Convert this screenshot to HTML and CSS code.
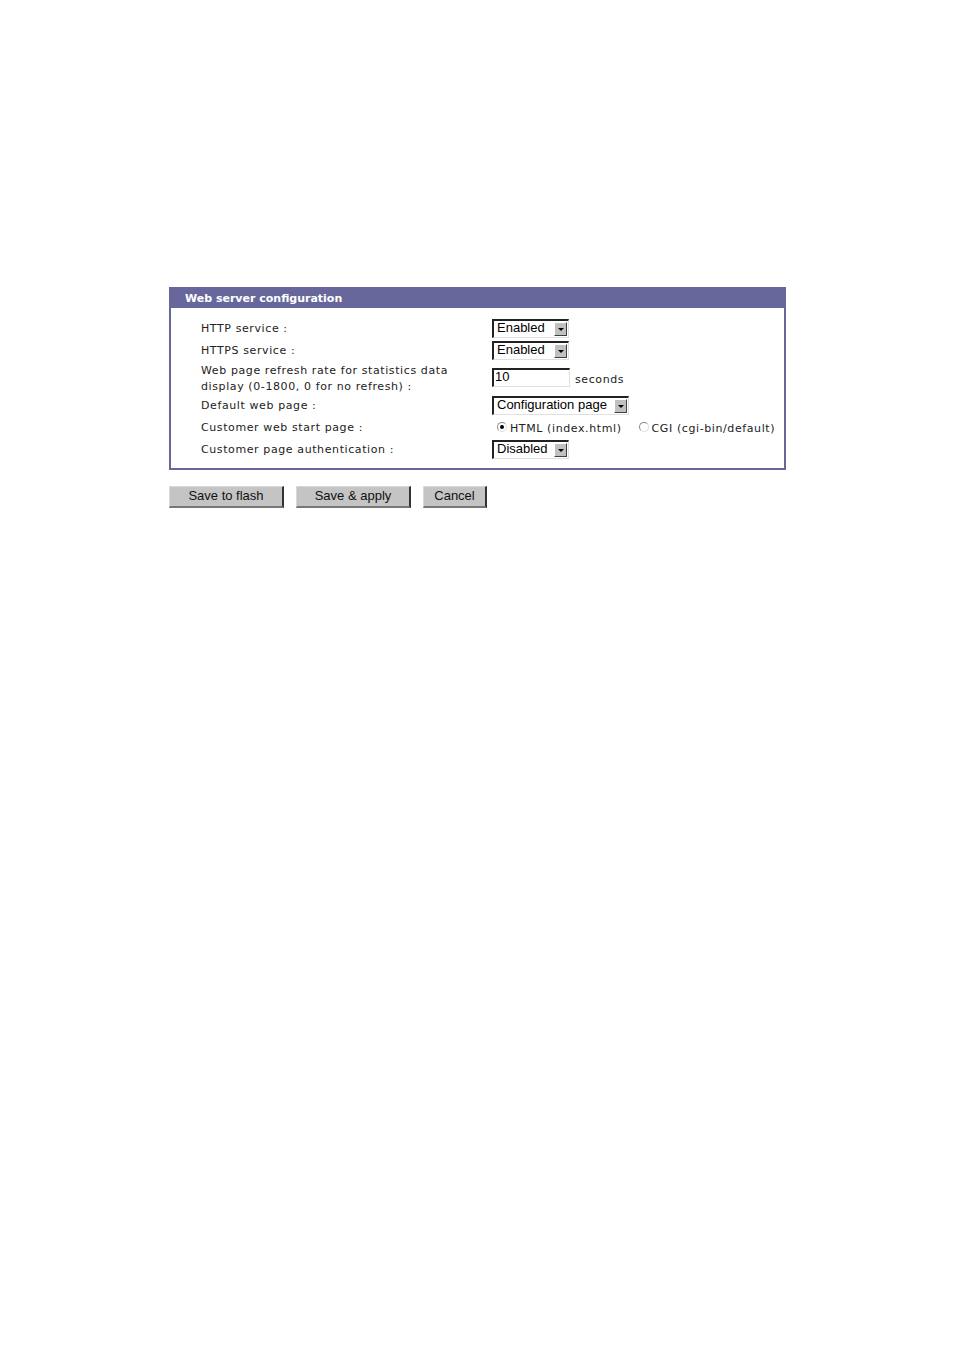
FILE: index.html
```html
<!DOCTYPE html>
<html>
<head>
<meta charset="utf-8">
<title>Web server configuration</title>
<link rel="stylesheet" href="styles.css">
</head>
<body>
<div class="page">
  <div class="panel">
    <div class="panel-head">Web server configuration</div>
    <div class="panel-body">
      <div class="row">
        <div class="label">HTTP service :</div>
        <div class="ctrl"><span class="sel w76"><span class="val">Enabled</span><span class="arr"></span></span></div>
      </div>
      <div class="row">
        <div class="label">HTTPS service :</div>
        <div class="ctrl"><span class="sel w76"><span class="val">Enabled</span><span class="arr"></span></span></div>
      </div>
      <div class="row tall">
        <div class="label">Web page refresh rate for statistics data<br>display (0-1800, 0 for no refresh) :</div>
        <div class="ctrl"><span class="inp">10</span><span class="unit">seconds</span></div>
      </div>
      <div class="row">
        <div class="label">Default web page :</div>
        <div class="ctrl"><span class="sel w136"><span class="val">Configuration page</span><span class="arr"></span></span></div>
      </div>
      <div class="row">
        <div class="label">Customer web start page :</div>
        <div class="ctrl radios">
          <span class="radio on"></span><span class="rtext">HTML (index.html)</span>
          <span class="radio r2"></span><span class="rtext">CGI (cgi-bin/default)</span>
        </div>
      </div>
      <div class="row">
        <div class="label">Customer page authentication :</div>
        <div class="ctrl"><span class="sel w76"><span class="val">Disabled</span><span class="arr"></span></span></div>
      </div>
    </div>
  </div>
  <div class="buttons">
    <span class="btn b1">Save to flash</span>
    <span class="btn b2">Save &amp; apply</span>
    <span class="btn b3">Cancel</span>
  </div>
</div>
</body>
</html>
```

FILE: styles.css
```css
html, body { margin: 0; padding: 0; background: #fff; }
.page { padding: 287px 0 0 169px; }
.panel {
  width: 613px;
  border: 2px solid #67679b;
  border-top: 0;
}
.panel-head {
  background: #67679b;
  color: #fff;
  font-family: "DejaVu Sans", Verdana, sans-serif;
  font-weight: bold;
  font-size: 11px;
  height: 21px;
  line-height: 23px;
  margin: 0 -2px;
  padding-left: 16px;
}
.panel-body { padding: 9px 0 8px 30px; }
.row { display: flex; align-items: center; height: 22px; }
.row.tall { height: 33px; }
.label {
  width: 291px;
  font-family: "DejaVu Sans", Verdana, sans-serif;
  font-size: 11px;
  letter-spacing: 0.6px;
  color: #222;
  line-height: 16px;
  padding-top: 2px;
}
.ctrl { display: flex; align-items: center; font-family: "Liberation Sans", Arial, sans-serif; font-size: 13px; color: #000; }
.sel {
  display: flex; align-items: center; justify-content: space-between;
  box-sizing: border-box; height: 19px;
  border-top: 2px solid #222; border-left: 2px solid #222;
  border-right: 1px solid #e0e0e0; border-bottom: 1px solid #e0e0e0;
  background: #fff;
  padding-left: 3px;
}
.w76 { width: 77px; }
.w136 { width: 137px; }
.val { line-height: 15px; margin-top: -2px; }
.arr {
  position: relative;
  width: 13px; height: 14px; box-sizing: border-box;
  background: #c0c0c0;
  border-top: 1px solid #fff; border-left: 1px solid #fff;
  border-right: 1px solid #404040; border-bottom: 1px solid #404040;
  margin-right: 1px;
}
.arr::after {
  content: ""; position: absolute; left: 3px; top: 5px;
  border-left: 3px solid transparent; border-right: 3px solid transparent;
  border-top: 3px solid #000;
}
.inp {
  box-sizing: border-box; width: 78px; height: 19px;
  border-top: 2px solid #222; border-left: 2px solid #222;
  border-right: 1px solid #e0e0e0; border-bottom: 1px solid #e0e0e0;
  padding-left: 1px; line-height: 14px;
  margin-top: -1px;
}
.unit {
  font-family: "DejaVu Sans", Verdana, sans-serif; font-size: 11px; letter-spacing: 0.6px; color: #222;
  margin-left: 5px; margin-top: 3px;
}
.radios { font-family: "DejaVu Sans", Verdana, sans-serif; font-size: 11px; letter-spacing: 0.6px; color: #222; padding-top: 2px; }
.radio {
  width: 10px; height: 10px; box-sizing: border-box; border-radius: 50%;
  border: 1px solid #888; border-right-color: #ddd; border-bottom-color: #ddd;
  background: #fff; position: relative; margin-left: 5px; margin-right: 3px; margin-top: -3px;
}
.radio.on::after {
  content: ""; position: absolute; left: 2px; top: 2px; width: 4px; height: 4px; border-radius: 50%; background: #000;
}
.radio.r2 { margin-left: 17px; }
.buttons { display: flex; gap: 12px; margin-top: 16px; }
.btn {
  box-sizing: border-box; height: 22px;
  background: #c4c4c4;
  border-right: 2px solid #333; border-bottom: 2px solid #777;
  border-top: 1px solid #d8d8d8; border-left: 1px solid #d8d8d8;
  font-family: "Liberation Sans", Arial, sans-serif; font-size: 13px; color: #111;
  display: flex; align-items: center; justify-content: center;
  padding-bottom: 2px;
}
.b1 { width: 115px; }
.b2 { width: 115px; }
.b3 { width: 64px; }
```
